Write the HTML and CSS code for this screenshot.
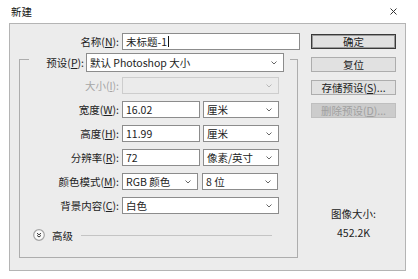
FILE: index.html
```html
<!DOCTYPE html>
<html lang="zh-CN">
<head>
<meta charset="UTF-8" />
<title>新建</title>
<link rel="stylesheet" href="styles.css">
</head>
<body>

<div class="titlebar">
  <span class="title">新建</span>
  <svg class="close" width="7" height="7" viewBox="0 0 7 7"><path d="M0.5 0.5 L6.5 6.5 M6.5 0.5 L0.5 6.5" stroke="#333" stroke-width="1" fill="none"/></svg>
</div>

<div class="panel">
  <div class="form">
    <div class="row name-row">
      <label class="lbl">名称(<u>N</u>):</label>
      <div class="field name-field">未标题-1<span class="caret"></span></div>
    </div>

    <div class="group">
      <div class="legend">
        <label class="lbl legend-lbl">预设(<u>P</u>):</label>
        <div class="select preset"><span>默认 Photoshop 大小</span><svg width="6" height="4" viewBox="0 0 6 4"><path d="M0.5 0.5 L3 3 L5.5 0.5" fill="none" stroke="#666"/></svg></div>
      </div>

      <div class="row">
        <label class="lbl off">大小(<u>I</u>):</label>
        <div class="select wide off"><span></span><svg width="6" height="4" viewBox="0 0 6 4"><path d="M0.5 0.5 L3 3 L5.5 0.5" fill="none" stroke="#b8b8b8"/></svg></div>
      </div>

      <div class="row">
        <label class="lbl">宽度(<u>W</u>):</label>
        <div class="field short">16.02</div>
        <div class="select unit"><span>厘米</span><svg width="6" height="4" viewBox="0 0 6 4"><path d="M0.5 0.5 L3 3 L5.5 0.5" fill="none" stroke="#666"/></svg></div>
      </div>

      <div class="row">
        <label class="lbl">高度(<u>H</u>):</label>
        <div class="field short">11.99</div>
        <div class="select unit"><span>厘米</span><svg width="6" height="4" viewBox="0 0 6 4"><path d="M0.5 0.5 L3 3 L5.5 0.5" fill="none" stroke="#666"/></svg></div>
      </div>

      <div class="row">
        <label class="lbl">分辨率(<u>R</u>):</label>
        <div class="field short">72</div>
        <div class="select unit"><span>像素/英寸</span><svg width="6" height="4" viewBox="0 0 6 4"><path d="M0.5 0.5 L3 3 L5.5 0.5" fill="none" stroke="#666"/></svg></div>
      </div>

      <div class="row">
        <label class="lbl">颜色模式(<u>M</u>):</label>
        <div class="select mode"><span>RGB 颜色</span><svg width="6" height="4" viewBox="0 0 6 4"><path d="M0.5 0.5 L3 3 L5.5 0.5" fill="none" stroke="#666"/></svg></div>
        <div class="select bits"><span>8 位</span><svg width="6" height="4" viewBox="0 0 6 4"><path d="M0.5 0.5 L3 3 L5.5 0.5" fill="none" stroke="#666"/></svg></div>
      </div>

      <div class="row">
        <label class="lbl">背景内容(<u>C</u>):</label>
        <div class="select wide"><span>白色</span><svg width="6" height="4" viewBox="0 0 6 4"><path d="M0.5 0.5 L3 3 L5.5 0.5" fill="none" stroke="#666"/></svg></div>
      </div>

      <div class="advanced">
        <svg class="adv-icon" width="12" height="12" viewBox="0 0 12 12"><circle cx="6" cy="6" r="5.3" fill="#fbfbfb" stroke="#a4a4a4" stroke-width="1.2"/><path d="M4 4.2 L6 5.8 L8 4.2 M4 6.4 L6 8 L8 6.4" fill="none" stroke="#333" stroke-width="1"/></svg>
        <span class="adv-text">高级</span>
        <span class="adv-line"></span>
      </div>
    </div>
  </div>

  <div class="side">
    <button class="btn default">确定</button>
    <button class="btn">复位</button>
    <button class="btn">存储预设(<u>S</u>)...</button>
    <button class="btn off">删除预设(<u>D</u>)...</button>
    <div class="info">图像大小:</div>
    <div class="info size">452.2K</div>
  </div>
</div>

</body>
</html>
```

FILE: styles.css
```css
body {
  margin: 0;
  background: #fff;
  font-family: "Noto Sans CJK SC", "Noto Sans", sans-serif;
  font-size: 10.5px;
  color: #222;
}
u {
  text-decoration: underline;
  text-underline-offset: 1px;
}
.titlebar {
  height: 23px;
  display: flex;
  align-items: center;
  justify-content: space-between;
  padding: 0 21px 0 11px;
}
.title {
  font-size: 10.5px;
  color: #111;
}
.panel {
  margin: 0 12px 0 9px;
  height: 248px;
  box-sizing: border-box;
  background: #ececec;
  border: 1px solid #b4b4b4;
  display: flex;
}
.form {
  width: 290px;
  padding-top: 9px;
}
.row {
  display: flex;
  align-items: center;
  height: 17px;
  margin-top: 7px;
}
.lbl {
  width: 99px;
  margin-right: 3px;
  text-align: right;
  white-space: nowrap;
  line-height: 17px;
}
.name-row {
  margin-top: 0;
}
.name-row .lbl {
  width: 109px;
}
.field, .select {
  height: 17px;
  box-sizing: border-box;
  border: 1px solid #8c8c8c;
  background: #fff;
  padding-left: 3px;
  line-height: 15px;
  white-space: nowrap;
}
.name-field {
  width: 178px;
  display: flex;
  align-items: center;
}
.caret {
  width: 1px;
  height: 11px;
  background: #111;
  margin-left: 1px;
}
.short {
  width: 78px;
  margin-right: 3px;
}
.select {
  display: flex;
  align-items: center;
  justify-content: space-between;
  padding-right: 6px;
}
.wide {
  width: 157px;
}
.unit {
  width: 76px;
}
.mode {
  width: 76px;
  margin-right: 4px;
}
.bits {
  width: 76px;
}
.select.off {
  background: #ebebeb;
  border-color: #cdcdcd;
}
.lbl.off {
  color: #a6a6a6;
}
.group {
  margin: 9px 0 0 9px;
  width: 279px;
  box-sizing: border-box;
  border: 1px solid #adadad;
  padding-bottom: 16px;
}
.legend {
  display: flex;
  align-items: center;
  margin: -7px 0 -1px 9px;
  width: 261px;
  height: 19px;
  background: #ececec;
}
.legend-lbl {
  width: 55px;
  margin-right: 2px;
}
.preset {
  width: 198px;
  height: 19px;
  line-height: 17px;
}
.group .row:nth-child(2) {
  margin-top: 6px;
}
.advanced {
  display: flex;
  align-items: center;
  height: 12px;
  margin-top: 15px;
  padding-left: 13px;
}
.adv-text {
  margin-left: 7px;
}
.adv-line {
  flex: 1;
  height: 1px;
  background: #c4c4c4;
  margin: 0 25px 0 8px;
}
.side {
  margin-left: 11px;
  width: 85px;
  padding-top: 10px;
  display: flex;
  flex-direction: column;
}
.btn {
  height: 15px;
  margin: 0 0 8px 0;
  padding: 0;
  box-sizing: border-box;
  border: 1px solid #adadad;
  background: #e1e1e1;
  font-family: inherit;
  font-size: 10.5px;
  line-height: 13px;
  color: #222;
}
.btn.default {
  border: 1px solid #3a3a3a;
  box-shadow: inset 0 0 0 1px #9a9a9a;
}
.btn.off {
  background: #cccccc;
  border-color: #bfbfbf;
  color: #a0a0a0;
}
.info {
  text-align: center;
  line-height: 14px;
  margin-top: 5px;
}
.info:nth-of-type(1) {
  margin-top: 81px;
}
```
